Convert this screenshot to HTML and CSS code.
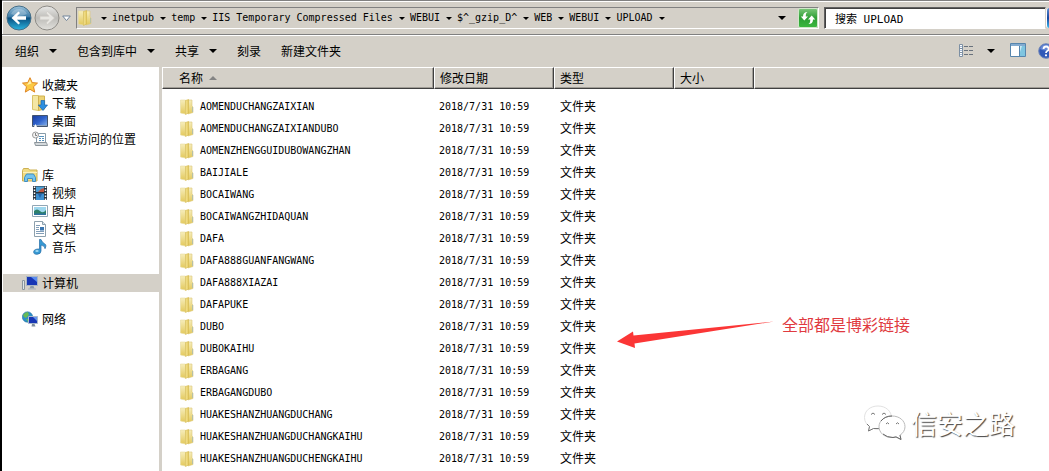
FILE: index.html
```html
<!DOCTYPE html>
<html lang="zh-CN">
<head>
<meta charset="utf-8">
<title>UPLOAD</title>
<link rel="stylesheet" href="styles.css">
</head>
<body>
<svg class="defs" aria-hidden="true">
  <defs>
    <linearGradient id="blue" x1="0" y1="0" x2="0" y2="1"><stop offset="0" stop-color="#9cc3dc"/><stop offset=".45" stop-color="#3a7ba8"/><stop offset=".5" stop-color="#0a4f80"/><stop offset="1" stop-color="#2bb5e0"/></linearGradient>
    <linearGradient id="silver" x1="0" y1="0" x2="0" y2="1"><stop offset="0" stop-color="#e9e9e7"/><stop offset=".5" stop-color="#bdbcb8"/><stop offset="1" stop-color="#e2e1dd"/></linearGradient>
    <linearGradient id="gold" x1="0" y1="0" x2="1" y2="0"><stop offset="0" stop-color="#f3e292"/><stop offset="1" stop-color="#e6cc62"/></linearGradient>
    <linearGradient id="pale" x1="0" y1="0" x2="0" y2="1"><stop offset="0" stop-color="#f6edbb"/><stop offset="1" stop-color="#e3c95c"/></linearGradient>
    <linearGradient id="screen" x1="0" y1="0" x2="1" y2="1"><stop offset="0" stop-color="#183a9c"/><stop offset=".5" stop-color="#2f62cc"/><stop offset="1" stop-color="#8db9ee"/></linearGradient>
    <linearGradient id="green" x1="0" y1="0" x2="0" y2="1"><stop offset="0" stop-color="#7cc77a"/><stop offset=".5" stop-color="#2e9f35"/><stop offset="1" stop-color="#3cb83f"/></linearGradient>
    <symbol id="folder" viewBox="0 0 16 16">
      <path d="M1.500 1h5v14l-5-1z" fill="url(#pale)" stroke="#e8dca0" stroke-width=".6"/>
      <path d="M9 1h4v6l1 1v5.500L9 15z" fill="url(#pale)" stroke="#dcc878" stroke-width=".6"/>
      <path d="M6.500 1.500L9.500 .5v13.500l-3 1.500z" fill="url(#gold)" stroke="#d4b84f" stroke-width=".6"/>
      <path d="M13.500 8v5" stroke="#a9bdb4" stroke-width=".8"/>
    </symbol>
  </defs>
</svg>
<div class="window">
  <header class="topbar">
    <div class="history">
      <button class="round" aria-label="后退"><svg width="26" height="26" viewBox="0 0 26 26"><circle cx="13" cy="13" r="12" fill="url(#blue)" stroke="#456f88"/><path d="M5 9a9 9 0 0 1 16 0q-8 4-16 0z" fill="#fff" opacity=".25"/><path d="M5.500 13l7-6.500 1.500 1.500-3 3.200h9v3.600h-9l3 3.200-1.500 1.500z" fill="#fff"/></svg></button>
      <button class="round" aria-label="前进"><svg width="26" height="26" viewBox="0 0 26 26"><circle cx="13" cy="13" r="12" fill="url(#silver)" stroke="#8e8c87"/><path d="M20.500 13l-7-6.500L12 8l3 3.200H6v3.600h9L12 18l1.500 1.500z" fill="#e7e6e2" stroke="#cccac5" stroke-width=".6"/></svg></button>
      <button class="recent" aria-label="最近的页面"><svg width="9" height="7" viewBox="0 0 9 7"><path d="M.7 1h7.600L4.500 5.600z" fill="#fff" stroke="#71849a"/></svg></button>
    </div>
    <nav class="address" aria-label="地址">
      <svg class="place" width="16" height="16"><use href="#folder"/></svg>
      <ol class="crumbs">
        <li></li><li>inetpub</li><li>temp</li><li>IIS Temporary Compressed Files</li><li>WEBUI</li><li>$^_gzip_D^</li><li>WEB</li><li>WEBUI</li><li>UPLOAD</li>
      </ol>
      <button class="drop" aria-label="以前的位置"><i class="down"></i></button>
      <button class="refresh" aria-label="刷新"><svg width="20" height="20" viewBox="0 0 20 20"><rect x=".5" y=".5" width="19" height="19" rx="1.500" fill="url(#green)" stroke="#cfe8c8"/><path d="M9.500 4Q7.800 5 7.800 7v1.500H10L6.300 12.500 2.800 8.500H5Q5 4 9.500 4z" fill="#fff"/><path d="M10.500 16q1.700-1 1.700-3v-1.500H10l3.700-4 3.500 4H15q0 4.500-4.500 4.500z" fill="#fff"/></svg></button>
    </nav>
    <input class="search" type="text" aria-label="搜索" value="搜索 UPLOAD">
    <button class="go" aria-label="开始搜索"></button>
  </header>

  <div class="toolbar">
    <button>组织<i class="down"></i></button>
    <button>包含到库中<i class="down"></i></button>
    <button>共享<i class="down"></i></button>
    <button>刻录</button>
    <button>新建文件夹</button>
    <div class="views">
      <button aria-label="更改视图"><svg width="16" height="14" viewBox="0 0 16 14"><g fill="#fff" stroke="#7c8fa3"><path d="M.5 .5h3v12h-3z"/><path d="M.5 4.500h3M.5 8.500h3"/></g><path d="M2 2v1M2 6v1M2 10v1" stroke="#4a74a8"/><path d="M5 2.500h4m1 0h4M5 6.500h4m1 0h4M5 10.500h4m1 0h4" stroke="#69727d"/></svg></button>
      <button aria-label="更多选项"><i class="down"></i></button>
      <button aria-label="显示预览窗格"><svg width="16" height="15" viewBox="0 0 16 15"><path d="M.5 .5h15v13H.5z" fill="#fff" stroke="#5685ad"/><path d="M1 2h14" stroke="#83abd0" stroke-width="2"/><path d="M10 3h5v10h-5z" fill="#7fc5e0"/><path d="M9.500 3v10" stroke="#5685ad"/><path d="M12 3l-2 6V3z" fill="#c8eaf4"/></svg></button>
      <button aria-label="帮助"><svg width="16" height="16" viewBox="0 0 16 16"><circle cx="8" cy="8" r="7.300" fill="#3159b8" stroke="#7388b8"/><path d="M2 6a6.300 6.300 0 0 1 12 0q-6 3-12 0z" fill="#8ba9e8" opacity=".6"/><path d="M5.500 6q.2-2.500 2.600-2.500T10.700 6q0 1.200-1.500 2Q8 8.700 8 10" fill="none" stroke="#fff" stroke-width="1.800"/><circle cx="8" cy="12.300" r="1.100" fill="#fff"/></svg></button>
    </div>
  </div>

  <div class="body">
    <nav class="side" aria-label="导航">
      <ul>
        <li><a class="root" href="#"><svg width="16" height="16" viewBox="0 0 16 16"><path d="M8 .7l2.200 4.900 5.300.5-4 3.600 1.200 5.400L8 12.300l-4.700 2.800 1.200-5.400-4-3.600 5.300-.5z" fill="#fbc944" stroke="#df8524"/><path d="M8 3l1.500 3.600L5 8z" fill="#fff0a8"/></svg>收藏夹</a></li>
        <li><a href="#"><svg width="16" height="16" viewBox="0 0 16 16"><path d="M.5 .5h6v15l-6-1z" fill="#f4e7a4" stroke="#d9c36a"/><path d="M6.500 1h6v13l-6 1.500z" fill="#ecd375" stroke="#cfb150"/><path d="M9 5.500h3.600V10h2.900L11 15.500 6.300 10H9z" fill="#2d8fe0" stroke="#1764b2" stroke-width=".7"/></svg>下载</a></li>
        <li><a href="#"><svg width="16" height="16" viewBox="0 0 16 16"><path d="M.5 2.500h15v11H.5z" fill="url(#screen)" stroke="#42536f"/><path d="M1 12.500h14" stroke="#8ba3c0" /><path d="M2 14l1.500-3L5 14z" fill="#fff"/></svg>桌面</a></li>
        <li><a href="#"><svg width="16" height="16" viewBox="0 0 16 16"><path d="M4.500 2.500h9v9h-9z" fill="#fff" stroke="#879ba9"/><path d="M7 5.500h5M7 7.500h2m1 0h2M7 9.500h2m1 0h2" stroke="#5792bd"/><path d="M2.500 11.500h12l1 3h-12z" fill="#d4d9dc" stroke="#8c959b"/><circle cx="3.500" cy="4" r="3" fill="#f3f3f3" stroke="#9a9a9a"/><path d="M3.500 2v2.500H5" fill="none" stroke="#666" stroke-width=".8"/></svg>最近访问的位置</a></li>
      </ul>
      <ul>
        <li><a class="root" href="#"><svg width="16" height="16" viewBox="0 0 16 16"><path d="M.5 3.500l1-2h5l1 1.500h7.500v11H.5z" fill="#f1dc83" stroke="#cdb053"/><path d="M1 5.500h14" stroke="#fbf1bf"/><path d="M2.500 13.500v-3l2-3.500h7l2 3.500v4h-3v-3h-5v3h-3z" fill="#74c3ed" stroke="#408fc2"/></svg>库</a></li>
        <li><a href="#"><svg width="16" height="16" viewBox="0 0 16 16"><path d="M1 1h14v14H1z" fill="#27323d"/><path d="M4 1.500h8V7H4z" fill="#4a9ed4"/><path d="M4 8.500h8V15H4z" fill="#3d8fd0"/><path d="M6 7l3-3 3-1v4z" fill="#bf5640"/><path d="M6 9h4l-2 4z" fill="#2263ac"/><path d="M2.500 1.500v14M13.500 1.500v14" stroke="#fff" stroke-width="1.500" stroke-dasharray="1.500 1.500"/></svg>视频</a></li>
        <li><a href="#"><svg width="16" height="16" viewBox="0 0 16 16"><path d="M.5 2.500h15v11H.5z" fill="#fff" stroke="#91a6b5"/><path d="M2 4h12v8H2z" fill="#9ed7ee"/><path d="M2 8q3-3 6 0t6-1v5H2z" fill="#2d806a"/><path d="M2 10.500h12V12H2z" fill="#2d71a0"/></svg>图片</a></li>
        <li><a href="#"><svg width="16" height="16" viewBox="0 0 16 16"><path d="M2.500 .5h8l3 3v12h-11z" fill="#fff" stroke="#8da0ad"/><path d="M10.500 .5v3h3" fill="#dce6ed" stroke="#8da0ad"/><path d="M4 4.500h4M4 6.500h3M4 8.500h3M4 10.500h8M4 12.500h8" stroke="#829eb8"/><path d="M8 6h4v3.500H8z" fill="#3874af"/></svg>文档</a></li>
        <li><a href="#"><svg width="16" height="16" viewBox="0 0 16 16"><path d="M7.500 .5h1.500q1 3 3.500 4.200t.5 5q.2-2.800-4-3.700V12q0 3-3.800 3.300T1.700 12.600q.4-2.800 5.800-2.600z" fill="#3799d3" stroke="#246ca6" stroke-width=".7"/><ellipse cx="5" cy="12" rx="1.700" ry="1" fill="#a1daf4"/></svg>音乐</a></li>
      </ul>
      <ul>
        <li class="current"><a class="root" href="#" aria-current="page"><svg width="16" height="16" viewBox="0 0 16 16"><path d="M.5 5.500h2v9h-2z" fill="#dfe6e8" stroke="#8b969e"/><path d="M4.500 1.500h11v9h-11z" fill="#1736b5" stroke="#a9b6c4"/><path d="M9 2h6v5z" fill="#5b8cef"/><path d="M8.500 11h3l1 2.500h-5z" fill="#8b99a7"/><path d="M6 14h8" stroke="#a8b2bc"/></svg>计算机</a></li>
      </ul>
      <ul>
        <li><a class="root" href="#"><svg width="16" height="16" viewBox="0 0 16 16"><circle cx="5.500" cy="6" r="5.200" fill="#2d8fc9" stroke="#2674a1" stroke-width=".6"/><path d="M1 4q2-3 5-3l1 3-3 3-2-1zM4 8l4 0-2 3z" fill="#68bb55"/><path d="M6.500 5.500h9v7h-9z" fill="#1736b5" stroke="#aab9cb"/><path d="M11 6h4v4z" fill="#6596ef"/><path d="M10 13h2.500l1 2.500h-4z" fill="#7e8d9c"/></svg>网络</a></li>
      </ul>
    </nav>

    <main class="files">
      <table>
        <colgroup><col class="c-name"><col class="c-date"><col class="c-type"><col class="c-size"><col></colgroup>
        <thead><tr><th>名称<i class="up"></i></th><th>修改日期</th><th>类型</th><th>大小</th><th></th></tr></thead>
        <tbody>
          <tr><td><svg width="16" height="16"><use href="#folder"/></svg>AOMENDUCHANGZAIXIAN</td><td>2018/7/31 10:59</td><td>文件夹</td><td></td><td></td></tr>
          <tr><td><svg width="16" height="16"><use href="#folder"/></svg>AOMENDUCHANGZAIXIANDUBO</td><td>2018/7/31 10:59</td><td>文件夹</td><td></td><td></td></tr>
          <tr><td><svg width="16" height="16"><use href="#folder"/></svg>AOMENZHENGGUIDUBOWANGZHAN</td><td>2018/7/31 10:59</td><td>文件夹</td><td></td><td></td></tr>
          <tr><td><svg width="16" height="16"><use href="#folder"/></svg>BAIJIALE</td><td>2018/7/31 10:59</td><td>文件夹</td><td></td><td></td></tr>
          <tr><td><svg width="16" height="16"><use href="#folder"/></svg>BOCAIWANG</td><td>2018/7/31 10:59</td><td>文件夹</td><td></td><td></td></tr>
          <tr><td><svg width="16" height="16"><use href="#folder"/></svg>BOCAIWANGZHIDAQUAN</td><td>2018/7/31 10:59</td><td>文件夹</td><td></td><td></td></tr>
          <tr><td><svg width="16" height="16"><use href="#folder"/></svg>DAFA</td><td>2018/7/31 10:59</td><td>文件夹</td><td></td><td></td></tr>
          <tr><td><svg width="16" height="16"><use href="#folder"/></svg>DAFA888GUANFANGWANG</td><td>2018/7/31 10:59</td><td>文件夹</td><td></td><td></td></tr>
          <tr><td><svg width="16" height="16"><use href="#folder"/></svg>DAFA888XIAZAI</td><td>2018/7/31 10:59</td><td>文件夹</td><td></td><td></td></tr>
          <tr><td><svg width="16" height="16"><use href="#folder"/></svg>DAFAPUKE</td><td>2018/7/31 10:59</td><td>文件夹</td><td></td><td></td></tr>
          <tr><td><svg width="16" height="16"><use href="#folder"/></svg>DUBO</td><td>2018/7/31 10:59</td><td>文件夹</td><td></td><td></td></tr>
          <tr><td><svg width="16" height="16"><use href="#folder"/></svg>DUBOKAIHU</td><td>2018/7/31 10:59</td><td>文件夹</td><td></td><td></td></tr>
          <tr><td><svg width="16" height="16"><use href="#folder"/></svg>ERBAGANG</td><td>2018/7/31 10:59</td><td>文件夹</td><td></td><td></td></tr>
          <tr><td><svg width="16" height="16"><use href="#folder"/></svg>ERBAGANGDUBO</td><td>2018/7/31 10:59</td><td>文件夹</td><td></td><td></td></tr>
          <tr><td><svg width="16" height="16"><use href="#folder"/></svg>HUAKESHANZHUANGDUCHANG</td><td>2018/7/31 10:59</td><td>文件夹</td><td></td><td></td></tr>
          <tr><td><svg width="16" height="16"><use href="#folder"/></svg>HUAKESHANZHUANGDUCHANGKAIHU</td><td>2018/7/31 10:59</td><td>文件夹</td><td></td><td></td></tr>
          <tr><td><svg width="16" height="16"><use href="#folder"/></svg>HUAKESHANZHUANGDUCHENGKAIHU</td><td>2018/7/31 10:59</td><td>文件夹</td><td></td><td></td></tr>
        </tbody>
      </table>
      <div class="note">
        <svg width="158" height="30" viewBox="0 0 158 30"><path d="M0 21.500L16 11.500l.5 4L157 1.500 17.500 23.500l.5 4.500z" fill="#fb3636"/></svg>
        <span>全部都是博彩链接</span>
      </div>
      <div class="mark">
        <svg width="44" height="38" viewBox="0 0 44 38"><g fill="#fff" stroke-linejoin="round"><path d="M15 2C7 2 1.500 7 1.500 13.500c0 4 2 7 5 9L5.500 27l5-2.500q2 .8 4.500.8c8 0 13.500-5 13.500-11.500S23 2 15 2z" stroke="#e2e2e2"/><path d="M4 20l2.500 2.500L5.500 27l5-2.500h6" fill="none" stroke="#777"/><path d="M29 12c-7.500 0-13 4.700-13 10.700S21.500 33.500 29 33.500q2 0 4-.6l5 2.600-1-4.300c3-2 5-5 5-8.500C42 16.700 36.500 12 29 12z" stroke="#bbb"/><path d="M18 17q4-5 11-5M20 30q4 3.500 10 3.500l3-.6 5 2.600-1-4.300" fill="none" stroke="#666"/></g><g fill="none" stroke="#777"><path d="M8 10.500q2-3 4 0M19 10.500q2-3 4 0M23 20q1.500-2.500 3 0M33 20q1.500-2.500 3 0"/></g></svg>
        <span>信安之路</span>
      </div>
    </main>
  </div>
</div>
</body>
</html>
```
FILE: styles.css
```css
* { box-sizing: border-box; }

body {
  margin: 0;
  background: #fff;
  color: #000;
  font: 12px/18px "Noto Sans CJK SC", sans-serif;
}

button {
  display: flex;
  align-items: center;
  padding: 0;
  border: 0;
  background: none;
  color: inherit;
  font: inherit;
}

svg { display: block; flex: none; }
.defs { position: absolute; width: 0; height: 0; }

.down, .up {
  display: block;
  border: 4px solid transparent;
  border-bottom-width: 0;
  border-top-color: #000;
}
.up {
  border-width: 0 4px 4px;
  border-bottom-color: #848484;
}

.window {
  display: flex;
  flex-direction: column;
  min-height: 100vh;
  border-left: 2px solid #000;
  overflow: hidden;
}

/* address row */
.topbar {
  display: flex;
  align-items: center;
  height: 35px;
  padding-top: 1px;
  border-top: 1px solid #808080;
  border-bottom: 1px solid #808080;
  background: #d4d0c8;
  box-shadow: inset 1px 1px #fff;
}
.history {
  display: flex;
  align-items: center;
  gap: 2px;
  width: 74px;
  padding-left: 4px;
}
.round { border-radius: 50%; }

.address {
  display: flex;
  align-items: center;
  flex: 1;
  min-width: 0;
  height: 22px;
  border: 1px solid;
  border-color: #808080 #fff #fff #808080;
}
.place { margin-right: 8px; }
.crumbs {
  display: flex;
  flex: 1;
  min-width: 0;
  overflow: hidden;
  margin: 0;
  padding: 0;
  list-style: none;
  font: 10px/18px "DejaVu Sans Mono", monospace;
  white-space: nowrap;
}
.crumbs li {
  display: flex;
  align-items: center;
  margin-right: -1px;
}
.crumbs li::after {
  content: "";
  margin: 0 6px;
  border: solid transparent;
  border-width: 3px 3px 0;
  border-top-color: #000;
}
.crumbs li:first-child::after { margin-left: 0; }
.drop { margin-right: 12px; }

.search {
  width: 222px;
  height: 22px;
  margin-left: 5px;
  padding: 0 10px;
  border: 1px solid;
  border-color: #606060 #d4d0c8 #fff #606060;
  border-radius: 0;
  background: #fff;
  box-shadow: inset 1px 1px #404040;
  font: 11px/18px "DejaVu Sans Mono", "Noto Sans CJK SC", monospace;
}
.go {
  width: 3px;
  height: 20px;
  border-left: 1px solid #fff;
  border-radius: 3px 0 0 3px;
  background: linear-gradient(#5e8fd0, #1746a0 50%, #35b5ee);
}

/* command bar */
.toolbar {
  display: flex;
  align-items: center;
  height: 32px;
  padding: 0 0 2px 13px;
  border-top: 1px solid #fff;
  background: #d4d0c8;
}
.toolbar > button { margin-right: 20px; white-space: nowrap; }
.toolbar .down { margin-left: 10px; }
.views {
  display: flex;
  align-items: center;
  gap: 12px;
  margin-left: auto;
  margin-right: -5px;
}
.views .down { margin: 0 3px 0 0; }

.body { display: flex; flex: 1; }

/* navigation pane */
.side {
  flex: none;
  width: 160px;
  padding: 9px 0 0 1px;
  border-right: 3px solid #d4d0c8;
}
.side ul {
  margin: 0 0 18px;
  padding: 0;
  list-style: none;
}
.side a {
  display: flex;
  align-items: center;
  gap: 4px;
  height: 18px;
  padding-left: 29px;
  color: #000;
  text-decoration: none;
  white-space: nowrap;
}
.side .root { padding-left: 19px; }
.current { background: #d4d0c8; }

/* file list */
.files {
  position: relative;
  flex: 1;
  min-width: 0;
}
table {
  width: 100%;
  table-layout: fixed;
  border-collapse: separate;
  border-spacing: 0;
}
.c-name { width: 272px; }
.c-date, .c-type { width: 120px; }
.c-size { width: 80px; }
th {
  height: 22px;
  padding: 0 5px;
  border: 1px solid;
  border-color: #fff #404040 #404040 #fff;
  background: #d4d0c8;
  box-shadow: inset -1px -1px #a09d96;
  font-weight: 400;
  line-height: 18px;
  text-align: left;
}
th:first-child { padding-left: 16px; }
th:last-child { border-right: 0; box-shadow: inset 0 -1px #a09d96; }
.up { display: inline-block; margin: 0 0 3px 6px; }
tbody::before {
  content: "";
  display: table-row;
  height: 6px;
}
td {
  height: 22px;
  padding: 0 6px;
  line-height: 18px;
  white-space: nowrap;
}
td:first-child, td:nth-child(2) {
  padding-top: 1px;
  font: 10px/18px "DejaVu Sans Mono", monospace;
}
td:first-child { padding-left: 17px; }
td:nth-child(2) { padding-left: 5px; }
td svg {
  display: inline-block;
  margin-right: 5px;
  vertical-align: middle;
}

/* remarks laid over the list */
.note, .mark {
  position: absolute;
  display: flex;
  pointer-events: none;
  white-space: nowrap;
}
.note {
  top: 253px;
  left: 455px;
  gap: 7px;
  align-items: flex-start;
  color: #e03a40;
  font-size: 16px;
  line-height: 8px;
}
.mark {
  top: 337px;
  right: 34px;
  gap: 4px;
  align-items: center;
  color: #fff;
  font-size: 26px;
  line-height: 36px;
  text-shadow: 1px 1px 1px #444;
}
```
